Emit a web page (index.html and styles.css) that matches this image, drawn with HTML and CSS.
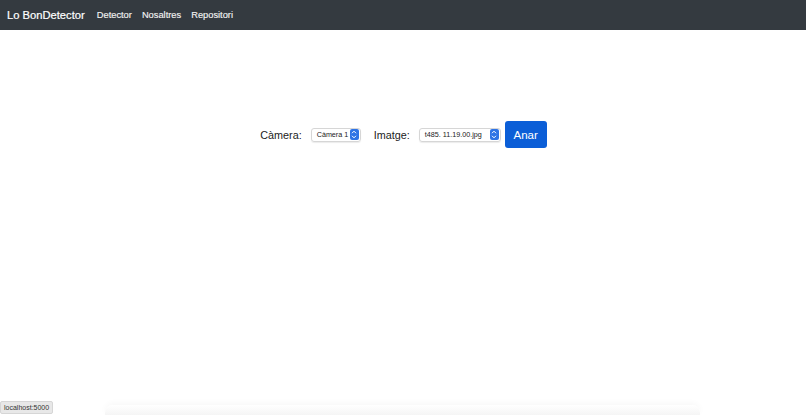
FILE: index.html
```html
<!DOCTYPE html>
<html lang="ca">
  <head>
    <meta charset="UTF-8" />
    <meta name="viewport" content="width=device-width, initial-scale=1.0" />
    <title>Lo BonDetector</title>
    <link rel="stylesheet" href="styles.css">
  </head>
  <body>
    <nav class="navbar">
      <a class="brand" href="#">Lo BonDetector</a>
      <a class="nav-link" href="#">Detector</a>
      <a class="nav-link" href="#">Nosaltres</a>
      <a class="nav-link" href="#">Repositori</a>
    </nav>

    <form class="detector">
      <label class="field-label">Càmera:</label>
      <span class="select cam">Càmera 1<i class="arrows"><svg width="6" height="9" viewBox="0 0 6 9"><path d="M1 3.2 L3 1.2 L5 3.2 M1 5.8 L3 7.8 L5 5.8" fill="none" stroke="#fff" stroke-width="1"/></svg></i></span>
      <label class="field-label">Imatge:</label>
      <span class="select img">t485. 11.19.00.jpg<i class="arrows"><svg width="6" height="9" viewBox="0 0 6 9"><path d="M1 3.2 L3 1.2 L5 3.2 M1 5.8 L3 7.8 L5 5.8" fill="none" stroke="#fff" stroke-width="1"/></svg></i></span>
      <button type="button" class="btn-go">Anar</button>
    </form>

    <div class="bottom-shade"></div>
    <div class="status">localhost:5000</div>
  </body>
</html>
```

FILE: styles.css
```css
body {
  margin: 0;
  font-family: "Liberation Sans", Arial, sans-serif;
  background: #fff;
  height: 415px;
  overflow: hidden;
  position: relative;
}

* {
  box-sizing: border-box;
}

.navbar {
  display: flex;
  align-items: center;
  height: 30px;
  padding: 0 7px;
  background-color: #343a40;
}

.brand {
  color: #fff;
  font-size: 11.2px;
  text-decoration: none;
  margin-right: 12px;
  -webkit-text-stroke: 0.2px #fff;
}

.nav-link {
  color: #f2f2f2;
  font-size: 9.3px;
  text-decoration: none;
  margin-right: 10px;
  -webkit-text-stroke: 0.15px #f2f2f2;
}

.detector {
  display: flex;
  align-items: center;
  justify-content: center;
  margin-top: 91px;
  padding-left: 1px;
}

.field-label {
  font-size: 10.8px;
  color: #222;
  margin-right: 9px;
}

.select {
  display: flex;
  align-items: center;
  justify-content: space-between;
  height: 14px;
  padding: 0 1px 0 5px;
  border: 1px solid #d6d6d6;
  border-radius: 3px;
  font-size: 7.2px;
  color: #222;
  white-space: nowrap;
  box-shadow: 0 1px 1px rgba(0, 0, 0, 0.08);
}

.select.cam {
  width: 50px;
  margin-right: 13px;
}

.select.img {
  width: 82px;
  margin-right: 4px;
}

.arrows {
  display: flex;
  align-items: center;
  justify-content: center;
  width: 9px;
  height: 11px;
  border-radius: 2px;
  background: #2f74e5;
}

.btn-go {
  height: 27px;
  width: 42px;
  border: 0;
  border-radius: 3px;
  background-color: #0b5ed7;
  color: #fff;
  font-family: inherit;
  font-size: 11.5px;
  padding: 0;
}

.bottom-shade {
  position: absolute;
  left: 105px;
  right: 106px;
  bottom: 0;
  height: 10px;
  border-radius: 8px 8px 0 0;
  background: linear-gradient(#ffffff, #f5f5f5);
  box-shadow: 0 -2px 6px rgba(0, 0, 0, 0.03);
}

.status {
  position: absolute;
  left: 0;
  bottom: 1px;
  font-size: 7px;
  padding: 2px 3px;
  background: #e8e8e8;
  border: 1px solid #d6d6d6;
  border-radius: 2px;
  color: #333;
}
```
